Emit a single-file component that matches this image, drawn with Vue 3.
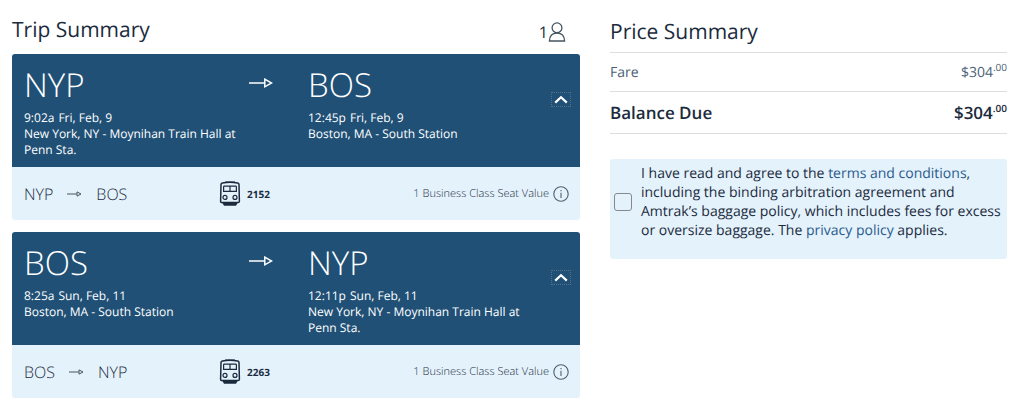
<script setup>
import { ref } from 'vue'

const agreed = ref(false)

const trips = [
  {
    from: { code: 'NYP', time: '9:02a', date: 'Fri, Feb, 9', station: 'New York, NY - Moynihan Train Hall at Penn Sta.' },
    to: { code: 'BOS', time: '12:45p', date: 'Fri, Feb, 9', station: 'Boston, MA - South Station' },
    train: '2152',
    seat: '1 Business Class Seat Value'
  },
  {
    from: { code: 'BOS', time: '8:25a', date: 'Sun, Feb, 11', station: 'Boston, MA - South Station' },
    to: { code: 'NYP', time: '12:11p', date: 'Sun, Feb, 11', station: 'New York, NY - Moynihan Train Hall at Penn Sta.' },
    train: '2263',
    seat: '1 Business Class Seat Value'
  }
]
</script>

<template>
  <main class="page">
    <section class="trips">
      <header class="trips-head">
        <h2 class="title">Trip Summary</h2>
        <div class="travelers">
          <span>1</span>
          <svg class="person" width="18" height="20" viewBox="0 0 18 20" aria-hidden="true">
            <circle cx="9" cy="5.8" r="4.9" />
            <path d="M1.4 19 C1.6 14.3 4.2 11.2 9 11.2 C13.8 11.2 16.4 14.3 16.6 19 Z" />
          </svg>
        </div>
      </header>

      <article v-for="trip in trips" :key="trip.train" class="card">
        <div class="route">
          <div class="stop">
            <div class="code">{{ trip.from.code }}</div>
            <div class="detail"><span class="time">{{ trip.from.time }}</span>{{ trip.from.date }}</div>
            <div class="detail">{{ trip.from.station }}</div>
          </div>
          <svg class="arrow" width="24" height="12" viewBox="0 0 24 12" aria-hidden="true">
            <path d="M0 6 H15.5 M15.8 2.2 L22.6 6 L15.8 9.8 Z" />
          </svg>
          <div class="stop">
            <div class="code">{{ trip.to.code }}</div>
            <div class="detail"><span class="time">{{ trip.to.time }}</span>{{ trip.to.date }}</div>
            <div class="detail">{{ trip.to.station }}</div>
          </div>
          <button class="toggle" type="button" aria-label="Collapse trip">
            <svg width="14" height="9" viewBox="0 0 14 9" aria-hidden="true">
              <path d="M1.2 7.6 L7 2.2 L12.8 7.6" />
            </svg>
          </button>
        </div>

        <div class="segment">
          <div class="leg">
            <span>{{ trip.from.code }}</span>
            <svg class="leg-arrow" width="15" height="8" viewBox="0 0 15 8" aria-hidden="true">
              <path d="M0 4 H9.8 M10 1.9 L14 4 L10 6.1 Z" />
            </svg>
            <span>{{ trip.to.code }}</span>
          </div>
          <div class="train">
            <svg width="22" height="26" viewBox="0 0 22 26" aria-hidden="true">
              <path class="line" d="M2 3.6 Q2 2.4 3.4 2.1 Q11 .4 18.6 2.1 Q20 2.4 20 3.6 L20.4 20.2 Q20.4 21.6 19 21.6 H3 Q1.6 21.6 1.6 20.2 Z" />
              <path class="thin" d="M6 1.2 H16 M4.6 6 Q4.6 5.2 5.4 5.2 H16.6 Q17.4 5.2 17.4 6 V10.4 H4.6 Z M11 5.2 V10.4" />
              <circle class="thin" cx="6" cy="16.4" r="2" />
              <circle class="thin" cx="16" cy="16.4" r="2" />
              <path class="solid" d="M3.4 22 H18.6 L17 24.8 H5 Z" />
            </svg>
            <strong>{{ trip.train }}</strong>
          </div>
          <div class="seat">
            <span>{{ trip.seat }}</span>
            <button class="info" type="button" aria-label="Seat information">
              <svg width="16" height="16" viewBox="0 0 16 16" aria-hidden="true">
                <circle cx="8" cy="8" r="7.2" />
                <path d="M8 6.7 V12 M8 4 V5.3" />
              </svg>
            </button>
          </div>
        </div>
      </article>
    </section>

    <section class="price">
      <h2 class="title">Price Summary</h2>
      <dl class="lines">
        <div class="line-item">
          <dt>Fare</dt>
          <dd>$304<sup>.00</sup></dd>
        </div>
        <div class="line-item total">
          <dt>Balance Due</dt>
          <dd>$304<sup>.00</sup></dd>
        </div>
      </dl>
      <div class="terms">
        <input id="agree" v-model="agreed" type="checkbox" />
        <label for="agree">I have read and agree to the <a href="#terms">terms and conditions</a>, including the binding arbitration agreement and Amtrak’s baggage policy, which includes fees for excess or oversize baggage. The <a href="#privacy">privacy policy</a> applies.</label>
      </div>
    </section>
  </main>
</template>

<style>
body {
  background: #fff;
}
</style>

<style scoped>
.page {
  display: grid;
  grid-template-columns: 568fr 397fr;
  gap: 30px;
  align-items: start;
  padding: 16px 17px 12px 12px;
  font-family: "Open Sans", "Noto Sans", sans-serif;
  text-rendering: geometricPrecision;
  color: #1b2b3d;
}

.title {
  margin: 0;
  font-size: 21px;
  font-weight: 400;
  line-height: 28px;
}

.trips {
  display: flex;
  flex-direction: column;
  gap: 12px;
}

.trips-head {
  display: flex;
  justify-content: space-between;
  align-items: center;
  height: 28px;
  margin-bottom: -2px;
  padding-right: 14px;
}

.travelers {
  display: flex;
  align-items: center;
  font-size: 16px;
  padding-top: 4px;
}

svg {
  display: block;
  fill: none;
}

.person {
  stroke: #46545f;
  stroke-width: 1.3;
}

.card {
  border-radius: 3px;
  overflow: hidden;
}

.route {
  position: relative;
  display: grid;
  grid-template-columns: 1fr 1fr;
  min-height: 113px;
  box-sizing: border-box;
  padding: 11px 0 9px;
  background: #205076;
  color: #fff;
}

.stop {
  padding: 0 60px 0 12px;
}

.code {
  font-size: 33px;
  font-weight: 300;
  line-height: 40px;
  margin-bottom: 5px;
}

.detail {
  font-size: 12px;
  line-height: 16px;
}

.time {
  margin-right: 4px;
}

.arrow {
  position: absolute;
  top: 23px;
  right: calc(50% + 23px);
  stroke: #fff;
  stroke-width: 1.5;
}

.toggle {
  position: absolute;
  top: 38px;
  right: 9px;
  display: grid;
  place-items: center;
  width: 20px;
  height: 15px;
  padding: 0;
  border: 1px dotted #55728a;
  background: none;
  color: #fff;
}

.toggle svg {
  stroke: #fff;
  stroke-width: 2.2;
}

.segment {
  display: grid;
  grid-template-columns: 207fr 100fr 250fr;
  align-items: center;
  min-height: 53px;
  padding-right: 11px;
  background: #e4f2fc;
}

.leg {
  display: flex;
  align-items: center;
  gap: 14px;
  padding-left: 12px;
  font-size: 16px;
  font-weight: 300;
}

.leg-arrow {
  stroke: #46545f;
  stroke-width: 1;
}

.train {
  display: flex;
  align-items: center;
  gap: 6px;
  font-size: 10px;
}

.line {
  stroke: #1b2b3d;
  stroke-width: 1.5;
}

.thin {
  stroke: #1b2b3d;
  stroke-width: 1.2;
}

.solid {
  fill: #1b2b3d;
}

.seat {
  display: flex;
  align-items: center;
  justify-content: flex-end;
  gap: 4px;
  font-size: 11px;
  font-weight: 300;
  color: #1b2b3d;
}

.info {
  padding: 0;
  border: 0;
  background: none;
}

.info svg {
  stroke: #4d606e;
  stroke-width: 1.1;
}

.price .title {
  padding: 2px 0 6px;
}

.lines {
  margin: 0 0 25px;
}

.line-item {
  display: flex;
  justify-content: space-between;
  align-items: center;
  min-height: 38px;
  border-top: 1px solid #dcdfe1;
  font-size: 14px;
  color: #4b6075;
}

.line-item dd {
  margin: 0;
}

.line-item sup {
  font-size: 10px;
  line-height: 0;
}

.total {
  min-height: 41px;
  border-bottom: 1px solid #dcdfe1;
  font-size: 17px;
  font-weight: 600;
  color: #1b2b3d;
}

.terms {
  display: flex;
  align-items: center;
  gap: 9px;
  padding: 5px 2px 19px 4px;
  border-radius: 3px;
  background: #e4f2fc;
  font-size: 14px;
  line-height: 19px;
}

.terms input {
  flex: none;
  appearance: none;
  width: 18px;
  height: 18px;
  margin: 0;
  border: 1px solid #85898c;
  border-radius: 3px;
  background: transparent;
}

.terms input:checked {
  background: #205076;
}

.terms a {
  color: #2a5a8c;
  text-decoration: none;
}
</style>
